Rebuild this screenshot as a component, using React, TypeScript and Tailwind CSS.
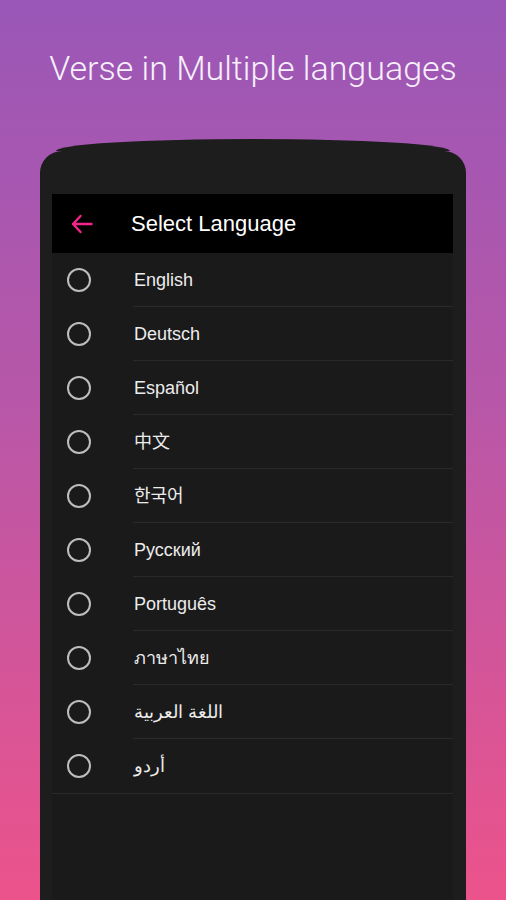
const languages = [
  'English',
  'Deutsch',
  'Español',
  '中文',
  '한국어',
  'Русский',
  'Português',
  'ภาษาไทย',
  'اللغة العربية',
  'أردو',
]

const BackArrow = () => (
  <svg width="22" height="20" viewBox="0 0 22 20" fill="none">
    <path
      d="M20.5 10H2M9.5 2L2 10l7.5 8"
      stroke="#f0268a"
      strokeWidth="2.4"
      strokeLinecap="round"
      strokeLinejoin="round"
    />
  </svg>
)

const App = () => {
  return (
    <div className="h-[900px] w-[506px] overflow-hidden bg-[linear-gradient(180deg,#9a57b7_0%,#b857a8_45%,#ec538b_100%)]">
      {/* headline */}
      <div className="pt-[51px] text-center text-[34px] leading-none font-light text-[#f7f0fb] font-['Roboto',sans-serif]">
        Verse in Multiple languages
      </div>

      {/* phone */}
      <div className="mx-[40px] mt-[54px]">
        {/* curved top of the device */}
        <div className="mx-[16px] h-[12px] rounded-tl-[50%_100%] rounded-tr-[50%_100%] bg-[#1d1d1d]" />
        <div className="h-[780px] rounded-t-[22px] bg-[#1d1d1d] pl-[12px] pr-[13px] pt-[43px]">
          <div className="h-full bg-[#1a1a1a] font-['Liberation_Sans','Noto_Sans_CJK_SC',sans-serif]">
            {/* toolbar */}
            <div className="flex h-[59px] items-center bg-black">
              <div className="ml-[19px] flex w-[60px]">
                <BackArrow />
              </div>
              <div className="text-[22px] text-white">Select Language</div>
            </div>

            {/* list */}
            <div className="border-b border-[#2a2a2a]">
              {languages.map((lang, i) => (
                <div key={lang} className="flex h-[54px] items-center">
                  <div className="flex w-[81px] pl-[15px]">
                    <div className="h-[24px] w-[24px] rounded-full border-2 border-[#bdbdbd]" />
                  </div>
                  <div
                    className={
                      i < languages.length - 1
                        ? 'flex h-full flex-1 items-center border-b border-[#2a2a2a] pt-[1px] pl-[1px]'
                        : 'flex h-full flex-1 items-center pt-[1px] pl-[1px]'
                    }
                  >
                    <span className="text-[18px] text-[#ececec]">{lang}</span>
                  </div>
                </div>
              ))}
            </div>
          </div>
        </div>
      </div>
    </div>
  )
}

export default App
